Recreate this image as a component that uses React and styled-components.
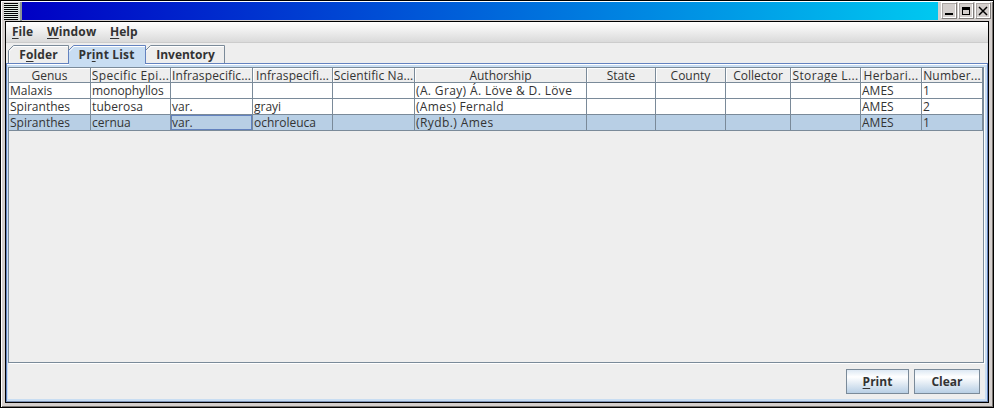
import React from "react";
import styled, { createGlobalStyle, css } from "styled-components";

const Global = createGlobalStyle`
  * { box-sizing: border-box; }
  body { margin: 0; background: #000; overflow: hidden; }
`;

const Frame = styled.div`
  width: 994px;
  height: 408px;
  border: 1px solid #000;
  background: #d4cfcd;
  box-shadow: inset 1px 1px #fff, inset -1px -1px #77736f;
  padding: 1px 4px 4px;
  display: flex;
  flex-direction: column;
  font: 12px "Open Sans", "Noto Sans", sans-serif;
  color: #333;
`;

const TitleBar = styled.div`
  height: 19px;
  flex: none;
  display: flex;
  margin: 0 -2px 0 -1px;
`;

const Grip = styled.div`
  width: 14px;
  margin: 1px 0 1px;
  background: repeating-linear-gradient(#000 0 1px, #e4efe6 1px 2px);
`;

const GripEdge = styled.div`
  width: 4px;
  background: #d4d8d2;
  border-right: 2px solid #8a9494;
`;

const Gradient = styled.div`
  flex: 1;
  margin-bottom: 1px;
  background: linear-gradient(90deg, #0000c4, #00c8f0);
`;

const WindowButtons = styled.div`
  width: 53px;
  display: flex;
  gap: 1px;
  padding-left: 3px;
`;

const WindowButton = styled.div`
  width: 16px;
  height: 17px;
  border: 1px solid;
  border-color: #fff #817d7b #817d7b #fff;
  box-shadow: inset 1px 1px #aaa5a3, inset -1px -1px #fff;
  svg { display: block; width: 14px; height: 15px; }
`;

const Content = styled.div`
  flex: 1;
  border: 1px solid #000;
  background: #eee;
  display: flex;
  flex-direction: column;
  min-height: 0;
`;

const MenuBar = styled.div`
  height: 21px;
  flex: none;
  display: flex;
  border-bottom: 1px solid #ccc;
  background: linear-gradient(#fff, #dadada);
`;

const Label = styled.span`
  white-space: pre;
  letter-spacing: ${(p) => p.$ls || 0}px;
  u { text-underline-offset: 2px; text-decoration-thickness: 1px; }
`;

const MenuItem = styled.div`
  width: ${(p) => p.$w}px;
  padding-left: 6px;
  font-weight: 700;
  line-height: 19px;
`;

const Tabs = styled.div`
  height: 20px;
  flex: none;
  display: flex;
  padding: 2px 0 0 2px;
`;

const TabItem = styled.div`
  position: relative;
  z-index: ${(p) => (p.$selected ? 1 : 0)};
  width: ${(p) => p.$w}px;
  height: 18px;
  font-weight: 700;
  line-height: 19px;
  text-align: center;
`;

const TabShape = styled.svg`
  position: absolute;
  left: 0;
  top: 0;
  overflow: visible;
  fill: none;
`;

const TabLabel = styled(Label)`
  position: relative;
  left: ${(p) => p.$dx || 0}px;
`;

const Pane = styled.div`
  flex: 1;
  display: flex;
  flex-direction: column;
  border: 1px solid #6382bf;
  border-bottom-color: #7a8fb4;
  box-shadow: inset 0 1px #fff, inset 1px 3px #c8ddf2, inset -2px -2px #c8ddf2;
  padding: 3px 3px 2px 1px;
`;

const TableBox = styled.div`
  height: 296px;
  flex: none;
  border: 1px solid #7a8a99;
  box-shadow: 1px 1px #fff;
`;

const Row = styled.div`
  display: grid;
  grid-template-columns: 82px 80px 82px 80px 82px 172px 69px 70px 65px 70px 61px 61px;
  height: ${(p) => (p.$head ? 15 : 16)}px;
  background: ${(p) => (p.$selected ? "#b8cfe5" : "#fff")};
`;

const Cell = styled.div`
  border-right: 1px solid #7a8a99;
  border-bottom: 1px solid #7a8a99;
  overflow: hidden;
  white-space: nowrap;
  line-height: 15px;
  padding-left: 1px;
  ${(p) => p.$head && css`
    background: #eee;
    box-shadow: inset 1px 1px #fff;
    text-align: center;
    padding-left: 0;
  `}
  ${(p) => p.$focus && css`box-shadow: inset 0 0 0 1px #6382bf;`}
`;

const Footer = styled.div`
  display: flex;
  justify-content: flex-end;
  gap: 5px;
  padding: 6px 4px 0 0;
`;

const Button = styled.div`
  width: ${(p) => p.$w}px;
  height: 25px;
  border: 1px solid #7a8a99;
  background: linear-gradient(#dde8f3, #fff 30%, #b8cfe5);
  text-align: center;
  font-weight: 700;
  line-height: 24px;
`;

const headers = [
  ["Genus"], ["Specific Epi...", 0.38], ["Infraspecific...", 0.12], ["Infraspecifi...", 0.1],
  ["Scientific Na...", 0.1], ["Authorship"], ["State"], ["County"], ["Collector"],
  ["Storage L...", 0.35], ["Herbari...", 0.3], ["Number...", 0.2],
];

const rows = [
  [["Malaxis"], ["monophyllos", -0.1], [""], [""], [""], ["(A. Gray) Á. Löve & D. Löve", 0.36], [""], [""], [""], [""], ["AMES"], ["1"]],
  [["Spiranthes"], ["tuberosa", 0.1], ["var."], ["grayi"], [""], ["(Ames) Fernald", 0.3], [""], [""], [""], [""], ["AMES"], ["2"]],
  [["Spiranthes"], ["cernua"], ["var."], ["ochroleuca"], [""], ["(Rydb.) Ames", 0.42], [""], [""], [""], [""], ["AMES"], ["1"]],
];

function Tab({ width, selected, first, dx, spacing, children }) {
  const x0 = first ? 0.5 : -0.5;
  const outline = `M${x0} ${first ? 18 : 5.5}V5.5L${x0 + 5} .5H${width - 0.5}V18`;
  return (
    <TabItem $w={width} $selected={selected}>
      <TabShape width={width} height="18">
        {selected && <path d={`M0 20V5.5L5 .5H${width}V18H${width - 1}V20z`} fill="#c8ddf2" />}
        <path d={`M${x0 + 1} ${first ? 18 : 6.5}V6L${x0 + 5.5} 1.5H${width - 1}`} stroke="#fff" />
        <path d={outline} stroke={selected ? "#6382bf" : "#7a8a99"} />
        {selected && <path d="M-.5 5V18" stroke="#6382bf" />}
      </TabShape>
      <TabLabel $dx={dx} $ls={spacing}>{children}</TabLabel>
    </TabItem>
  );
}

export default function App() {
  return (
    <>
      <Global />
      <Frame>
        <TitleBar>
          <Grip /><GripEdge /><Gradient />
          <WindowButtons>
            <WindowButton><svg><path d="M3 10h8v2H3z" /></svg></WindowButton>
            <WindowButton><svg><path d="M3 4h8v8H3zM4 7v4h6V7z" fillRule="evenodd" /></svg></WindowButton>
            <WindowButton><svg><path d="M3 4l8 8M11 4l-8 8" stroke="#000" strokeWidth="1.5" /></svg></WindowButton>
          </WindowButtons>
        </TitleBar>
        <Content>
          <MenuBar>
            <MenuItem $w={35}><Label><u>F</u>ile</Label></MenuItem>
            <MenuItem $w={63}><Label $ls={0.15}><u>W</u>indow</Label></MenuItem>
            <MenuItem $w={40}><Label><u>H</u>elp</Label></MenuItem>
          </MenuBar>
          <Tabs>
            <Tab width={61} first spacing={0.1}>F<u>o</u>lder</Tab>
            <Tab width={77} selected dx={-1} spacing={0.15}>Pr<u>i</u>nt List</Tab>
            <Tab width={79}>Inventory</Tab>
          </Tabs>
          <Pane>
            <TableBox>
              <Row $head>
                {headers.map(([t, ls], i) => <Cell $head key={i}><Label $ls={ls}>{t}</Label></Cell>)}
              </Row>
              {rows.map((r, j) => (
                <Row key={j} $selected={j === 2}>
                  {r.map(([t, ls], i) => (
                    <Cell key={i} $focus={j === 2 && i === 2}><Label $ls={ls}>{t}</Label></Cell>
                  ))}
                </Row>
              ))}
            </TableBox>
            <Footer>
              <Button $w={63}><Label><u>P</u>rint</Label></Button>
              <Button $w={66}><Label>Clear</Label></Button>
            </Footer>
          </Pane>
        </Content>
      </Frame>
    </>
  );
}
